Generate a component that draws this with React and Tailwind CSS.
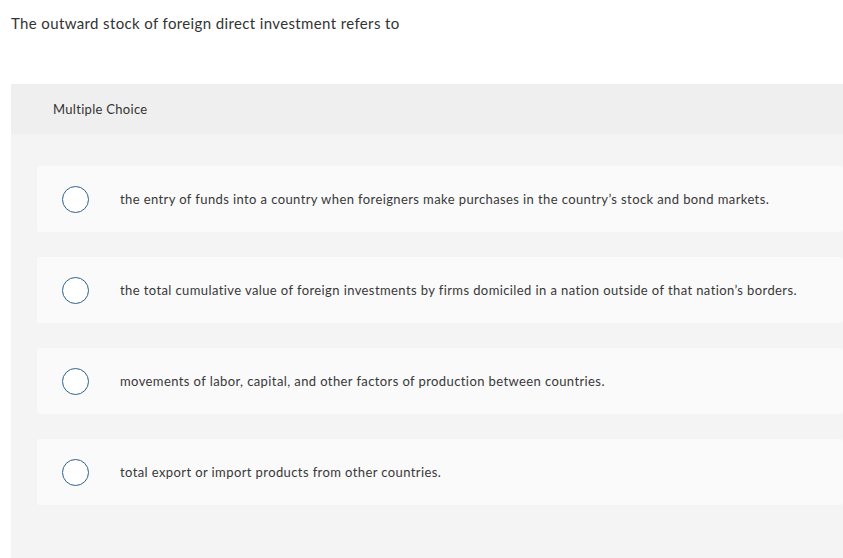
import React from "react";

const options = [
  "the entry of funds into a country when foreigners make purchases in the country’s stock and bond markets.",
  "the total cumulative value of foreign investments by firms domiciled in a nation outside of that nation’s borders.",
  "movements of labor, capital, and other factors of production between countries.",
  "total export or import products from other countries.",
];

export default function App() {
  return (
    <div className="w-[843px] h-[558px] bg-white overflow-hidden text-[#333]" style={{ fontFamily: "Lato, 'Open Sans', sans-serif" }}>
      <div className="pl-[11px] pt-[13px] h-[84px] text-[15px] leading-[20px] tracking-[0.37px] text-[#333]">
        The outward stock of foreign direct investment refers to
      </div>
      <div className="ml-[11px] bg-[#f4f4f4] h-[474px]">
        <div className="h-[50px] bg-[#efefef] flex items-center pl-[42px] pt-[1px] text-[13px] tracking-[0.3px] text-[#333]">
          Multiple Choice
        </div>
        <div className="pl-[26px] pt-[32px] flex flex-col gap-[25px]">
          {options.map((o, i) => (
            <div key={i} className="h-[66px] bg-[#fafafa] rounded-[3px] flex items-center">
              <div className="ml-[25px] w-[27px] h-[27px] rounded-full border-[1.5px] border-[#2f5f8f] bg-white shrink-0" />
              <div className="ml-[31px] pt-[1px] text-[13px] tracking-[0.4px] text-[#383838]">{o}</div>
            </div>
          ))}
        </div>
      </div>
    </div>
  );
}
